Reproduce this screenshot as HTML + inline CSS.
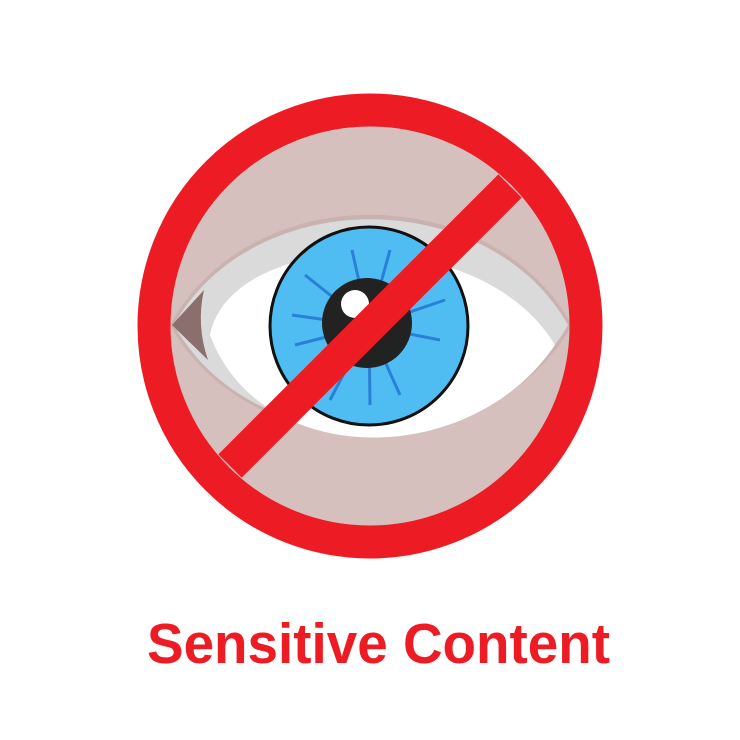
<!DOCTYPE html>
<html><head><meta charset="utf-8"><style>html,body{margin:0;padding:0;background:#fff}svg{display:block}</style></head>
<body>
<svg width="740" height="740" viewBox="0 0 740 740" xmlns="http://www.w3.org/2000/svg">
<defs><clipPath id="c"><circle cx="370" cy="326" r="200"/></clipPath></defs>
<circle cx="370" cy="326" r="200" fill="#d6c0be"/>
<g clip-path="url(#c)">
<path d="M170 325 C 250 178, 490 178, 572 325 C 490 470, 250 470, 170 325 Z" fill="#c9b3b1"/>
<path d="M174 325 C 252 184, 488 184, 568 325 C 488 466, 252 466, 174 325 Z" fill="#dadada"/>
<path d="M210 335 C 230 230, 480 220, 555 345 C 470 470, 260 470, 210 335 Z" fill="#ffffff"/>
<path d="M172 325 L204 290 Q196 325 208 360 Z" fill="#8b6e6e"/>
<circle cx="369" cy="326" r="99" fill="#4fbdf2" stroke="#111" stroke-width="3"/>
<g stroke="#2a7fd6" stroke-width="3">
<line x1="369" y1="326" x2="352" y2="250"/><line x1="369" y1="326" x2="305" y2="275"/>
<line x1="369" y1="326" x2="292" y2="315"/><line x1="369" y1="326" x2="295" y2="345"/>
<line x1="369" y1="326" x2="330" y2="400"/><line x1="369" y1="326" x2="370" y2="405"/>
<line x1="369" y1="326" x2="400" y2="395"/><line x1="369" y1="326" x2="440" y2="340"/>
<line x1="369" y1="326" x2="445" y2="300"/><line x1="369" y1="326" x2="390" y2="250"/>
</g>
<circle cx="367" cy="323" r="45" fill="#222"/>
<circle cx="355" cy="304" r="14" fill="#fff"/>
</g>
<circle cx="370" cy="326" r="216" fill="none" stroke="#ed1c24" stroke-width="33"/>
<line x1="230" y1="466" x2="510" y2="186" stroke="#ed1c24" stroke-width="33"/>
<text x="147" y="663" font-family="Liberation Sans, sans-serif" font-weight="bold" font-size="57" fill="#ed1c24" textLength="463" lengthAdjust="spacingAndGlyphs">Sensitive Content</text>
</svg>
</body></html>
